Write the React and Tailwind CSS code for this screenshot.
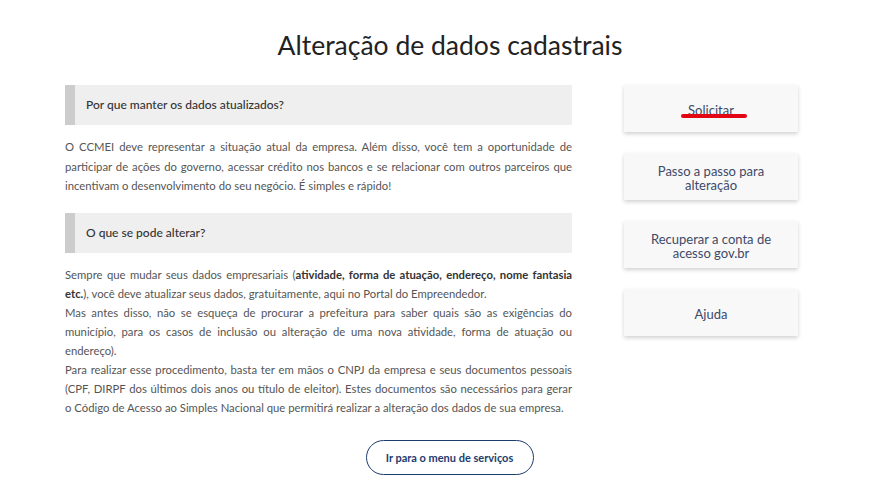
import React from "react";

const J = "[text-align-last:justify]";

function Line({ children, last }) {
  return <div className={last ? "text-left" : "text-justify " + J}>{children}</div>;
}

function Header({ children }) {
  return (
    <div className="flex h-[40px] items-stretch bg-[#efefef]">
      <div className="w-[10px] bg-[#cccccc]" />
      <div className="flex items-center pl-[11px] text-[12px] font-medium text-[#333333]">{children}</div>
    </div>
  );
}

function Card({ lines, mark }) {
  return (
    <div className="relative flex h-[47px] flex-col items-center justify-center bg-[#f8f8f8] pt-[3px] text-center text-[13px] leading-[14px] text-[#3d4a68] shadow-[0_2px_4px_rgba(0,0,0,0.18)]">
      {lines.map((l) => (
        <div key={l} className="h-[14px]">{l}</div>
      ))}
      {mark && (
        <div className="absolute left-[57px] top-[29px] h-[4px] w-[66px] rounded-full bg-[#e30613]" />
      )}
    </div>
  );
}

export default function App() {
  return (
    <div className="min-h-[489px] w-[886px] bg-white font-['Lato',sans-serif]">
      <div className="pl-[14px] pt-[28px] text-center text-[26.5px] leading-[34px] text-[#222222]">
        Alteração de dados cadastrais
      </div>
      <div className="ml-[65px] mt-[23px] w-[769px]">
        <div className="flex gap-[52px]">
          <div className="w-[507px]">
            <Header>Por que manter os dados atualizados?</Header>
            <div className="mt-[12px] text-[11.3px] leading-[19.5px] text-[#555555]">
              <Line>O CCMEI deve representar a situação atual da empresa. Além disso, você tem a oportunidade de</Line>
              <Line>participar de ações do governo, acessar crédito nos bancos e se relacionar com outros parceiros que</Line>
              <Line last>incentivam o desenvolvimento do seu negócio. É simples e rápido!</Line>
            </div>
            <div className="mt-[17px]">
              <Header>O que se pode alterar?</Header>
            </div>
            <div className="mt-[12px] text-[11.3px] leading-[19.1px] text-[#555555]">
              <Line>
                Sempre que mudar seus dados empresariais (
                <b className="font-bold text-[#333333]">atividade, forma de atuação, endereço, nome fantasia</b>
              </Line>
              <Line last>
                <b className="font-bold text-[#333333]">etc.</b>), você deve atualizar seus dados, gratuitamente, aqui no Portal do Empreendedor.
              </Line>
              <Line>Mas antes disso, não se esqueça de procurar a prefeitura para saber quais são as exigências do</Line>
              <Line>município, para os casos de inclusão ou alteração de uma nova atividade, forma de atuação ou</Line>
              <Line last>endereço).</Line>
              <Line>Para realizar esse procedimento, basta ter em mãos o CNPJ da empresa e seus documentos pessoais</Line>
              <Line>(CPF, DIRPF dos últimos dois anos ou título de eleitor). Estes documentos são necessários para gerar</Line>
              <Line last>o Código de Acesso ao Simples Nacional que permitirá realizar a alteração dos dados de sua empresa.</Line>
            </div>
          </div>
          <div className="flex w-[174px] flex-col gap-[21px]">
            <Card mark lines={["Solicitar"]} />
            <Card lines={["Passo a passo para", "alteração"]} />
            <Card lines={["Recuperar a conta de", "acesso gov.br"]} />
            <Card lines={["Ajuda"]} />
          </div>
        </div>
        <div className="mt-[23px] flex justify-center">
          <div className="flex h-[35px] w-[168px] items-center justify-center rounded-full border-[1.5px] border-[#1d3c6e] text-[11px] font-bold text-[#1d3c6e]">
            Ir para o menu de serviços
          </div>
        </div>
      </div>
    </div>
  );
}
